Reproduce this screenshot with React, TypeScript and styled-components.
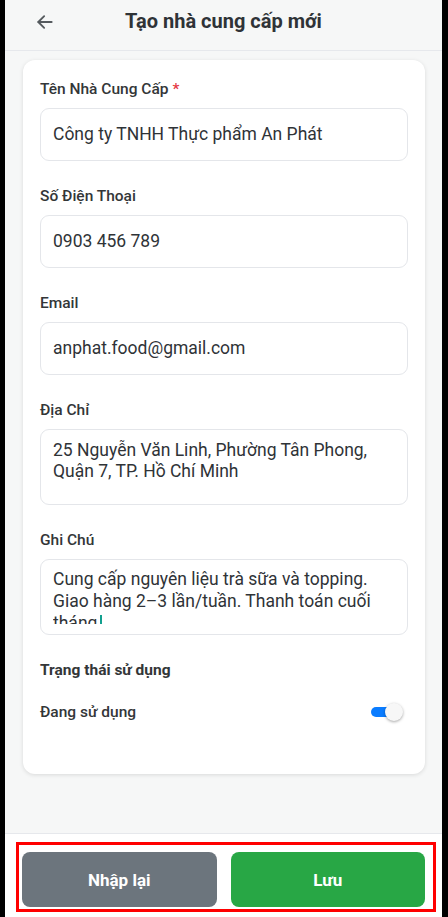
import styled, { createGlobalStyle } from "styled-components";

const colors = {
  page: "#f6f7f7",
  line: "#e6e8ec",
  text: "#2f3337",
  label: "#333638",
  border: "#e4e6ea",
  required: "#e53945",
  toggle: "#0a7cff",
  caret: "#12a08f",
  reset: "#6c757d",
  save: "#28a745",
  mark: "#ff0000",
};

const GlobalStyle = createGlobalStyle`
  html, body {
    margin: 0;
    padding: 0;
    background: #000;
  }
  body {
    font-family: Roboto, "Noto Sans", "Liberation Sans", sans-serif;
    -webkit-font-smoothing: antialiased;
  }
  * { box-sizing: border-box; }
`;

// ── Layout ────────────────────────────────────────────────────────────────────

const Screen = styled.div`
  height: 917px;
  margin: 0 6px 0 5px;
  background: ${colors.page};
  display: flex;
  flex-direction: column;
  overflow: hidden;
`;

const Header = styled.header`
  height: 51px;
  flex: none;
  display: flex;
  align-items: center;
  justify-content: center;
  position: relative;
  border-bottom: 1px solid ${colors.line};
`;

const BackButton = styled.button`
  position: absolute;
  left: 28px;
  top: 10px;
  width: 24px;
  height: 24px;
  padding: 0;
  border: 0;
  background: none;
  display: flex;
  align-items: center;
  justify-content: center;
  color: #555a5e;
`;

const Title = styled.h1`
  margin: 0 0 8px;
  font-size: 20px;
  font-weight: 700;
  color: ${colors.text};
`;

const Body = styled.main`
  flex: 1;
  padding: 9px 17px 0 18px;
`;

const Card = styled.section`
  background: #fff;
  border-radius: 12px;
  box-shadow: 0 1px 4px rgba(0, 0, 0, 0.12);
  padding: 19px 17px 53px;
  display: flex;
  flex-direction: column;
`;

const Field = styled.div`
  display: flex;
  flex-direction: column;
  margin-bottom: 25px;
`;

const Label = styled.label`
  font-size: 15.5px;
  line-height: 20px;
  font-weight: 500;
  color: ${colors.label};
  margin-bottom: 9px;
`;

const Required = styled.span`
  color: ${colors.required};
  margin-left: 4px;
`;

const Input = styled.div<{ $tall?: boolean }>`
  height: ${p => (p.$tall ? 76 : 53)}px;
  border: 1px solid ${colors.border};
  border-radius: 9px;
  padding: ${p => (p.$tall ? "10px 12px 0" : "0 12px")};
  display: flex;
  align-items: ${p => (p.$tall ? "flex-start" : "center")};
  font-size: 17.5px;
  line-height: 21px;
  color: ${colors.text};
`;

const NoteBox = styled.div`
  height: 76px;
  border: 1px solid ${colors.border};
  border-radius: 9px;
  padding: 8px 12px 0;
`;

const NoteText = styled.div`
  height: 56px;
  overflow: hidden;
  font-size: 17.5px;
  line-height: 22px;
  color: ${colors.text};
`;

const Caret = styled.span`
  display: inline-block;
  width: 2px;
  height: 17px;
  margin-left: 3px;
  vertical-align: -3px;
  background: ${colors.caret};
`;

const SectionTitle = styled.div`
  font-size: 15.5px;
  line-height: 20px;
  font-weight: 700;
  color: ${colors.label};
`;

const SwitchRow = styled.div`
  display: flex;
  align-items: center;
  justify-content: space-between;
  margin-top: 23px;
  padding-right: 7px;
`;

const SwitchLabel = styled.span`
  font-size: 15.5px;
  font-weight: 500;
  color: ${colors.label};
`;

const Track = styled.span<{ $on: boolean }>`
  position: relative;
  width: 30px;
  height: 10px;
  border-radius: 5px;
  background: ${p => (p.$on ? colors.toggle : "#c4c7cc")};
`;

const Knob = styled.span<{ $on: boolean }>`
  position: absolute;
  top: -4px;
  ${p => (p.$on ? "right: -2px;" : "left: -2px;")}
  width: 18px;
  height: 18px;
  border-radius: 50%;
  background: #f7f7f7;
  box-shadow: 0 1px 3px rgba(0, 0, 0, 0.35);
`;

const Footer = styled.footer`
  flex: none;
  height: 84px;
  background: #fff;
  border-top: 1px solid ${colors.line};
  padding: 8px 0 0 11px;
`;

const Highlight = styled.div`
  width: 420px;
  height: 70px;
  border: 3px solid ${colors.mark};
  padding: 7px 8px 0 3px;
  display: flex;
  gap: 14px;
`;

const Button = styled.button<{ $variant: "reset" | "save" }>`
  flex: 1;
  height: 55px;
  border: 0;
  border-radius: 8px;
  background: ${p => (p.$variant === "save" ? colors.save : colors.reset)};
  color: #fff;
  font-family: inherit;
  font-size: 17px;
  font-weight: 700;
`;

// ── Page ──────────────────────────────────────────────────────────────────────

const BackArrow = () => (
  <svg width="20" height="20" viewBox="0 0 24 24" fill="none" stroke="currentColor" strokeWidth="2.2" strokeLinecap="round" strokeLinejoin="round">
    <path d="M20 12H4" />
    <path d="M11 5l-7 7 7 7" />
  </svg>
);

export default function App() {
  const active = true;

  return (
    <>
      <GlobalStyle />
      <Screen>
        <Header>
          <BackButton aria-label="Quay lại"><BackArrow /></BackButton>
          <Title>Tạo nhà cung cấp mới</Title>
        </Header>

        <Body>
          <Card>
            <Field>
              <Label>Tên Nhà Cung Cấp<Required>*</Required></Label>
              <Input>Công ty TNHH Thực phẩm An Phát</Input>
            </Field>
            <Field>
              <Label>Số Điện Thoại</Label>
              <Input>0903 456 789</Input>
            </Field>
            <Field>
              <Label>Email</Label>
              <Input>anphat.food@gmail.com</Input>
            </Field>
            <Field>
              <Label>Địa Chỉ</Label>
              <Input $tall>25 Nguyễn Văn Linh, Phường Tân Phong, Quận 7, TP. Hồ Chí Minh</Input>
            </Field>
            <Field>
              <Label>Ghi Chú</Label>
              <NoteBox>
                <NoteText>
                  Cung cấp nguyên liệu trà sữa và topping. Giao hàng 2–3 lần/tuần. Thanh toán cuối tháng<Caret />
                </NoteText>
              </NoteBox>
            </Field>

            <SectionTitle>Trạng thái sử dụng</SectionTitle>
            <SwitchRow>
              <SwitchLabel>Đang sử dụng</SwitchLabel>
              <Track $on={active}><Knob $on={active} /></Track>
            </SwitchRow>
          </Card>
        </Body>

        <Footer>
          <Highlight>
            <Button $variant="reset">Nhập lại</Button>
            <Button $variant="save">Lưu</Button>
          </Highlight>
        </Footer>
      </Screen>
    </>
  );
}
